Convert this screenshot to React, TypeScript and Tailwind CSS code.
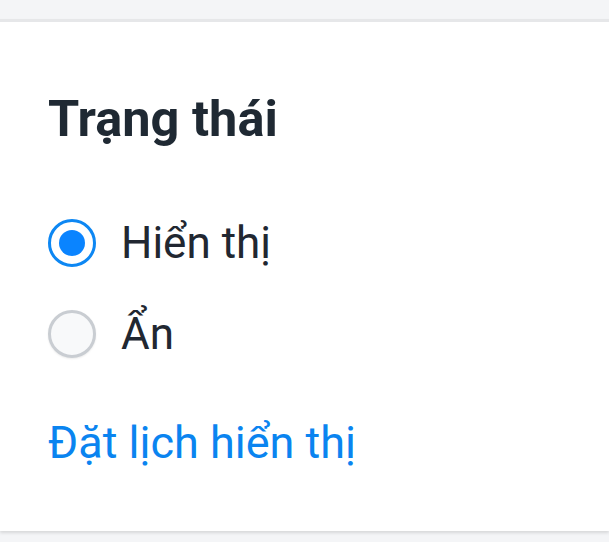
import { useState } from 'react';

type Option = {
  id: string;
  label: string;
};

const options: Option[] = [
  { id: 'show', label: 'Hiển thị' },
  { id: 'hide', label: 'Ẩn' },
];

export default function App() {
  const [status, setStatus] = useState('show');

  return (
    <div className="min-h-[542px] bg-[#f4f5f7] pt-[19px] font-['Roboto',sans-serif]">
      <div className="border-t-[3px] border-[#e6e7e9] bg-white pb-[58px] pl-[48px] pt-[67px] shadow-[0_2px_3px_rgba(0,0,0,0.12)]">
        <h2 className="text-[50.5px] font-bold leading-[60px] text-[#1f2933]">Trạng thái</h2>

        <div className="mt-[64px] flex flex-col gap-[31px]">
          {options.map((option) => {
            const checked = status === option.id;
            return (
              <label
                key={option.id}
                className="flex h-[60px] cursor-pointer items-center gap-[25px]"
                onClick={() => setStatus(option.id)}
              >
                <span
                  className={`flex h-[48px] w-[48px] items-center justify-center rounded-full border-[3px] ${
                    checked
                      ? 'border-[#0d87f3] bg-white'
                      : 'border-[#c9cdd2] bg-[#f8f9fa] shadow-[0_1px_2px_rgba(0,0,0,0.08)]'
                  }`}
                >
                  {checked && <span className="h-[26px] w-[26px] rounded-full bg-[#0a84ff]" />}
                </span>
                <span className="text-[44px] leading-[60px] text-[#212731]">{option.label}</span>
              </label>
            );
          })}
        </div>

        <div className="mt-[49px]">
          <a className="text-[45px] leading-[60px] text-[#0a84f0]">Đặt lịch hiển thị</a>
        </div>
      </div>
    </div>
  );
}
